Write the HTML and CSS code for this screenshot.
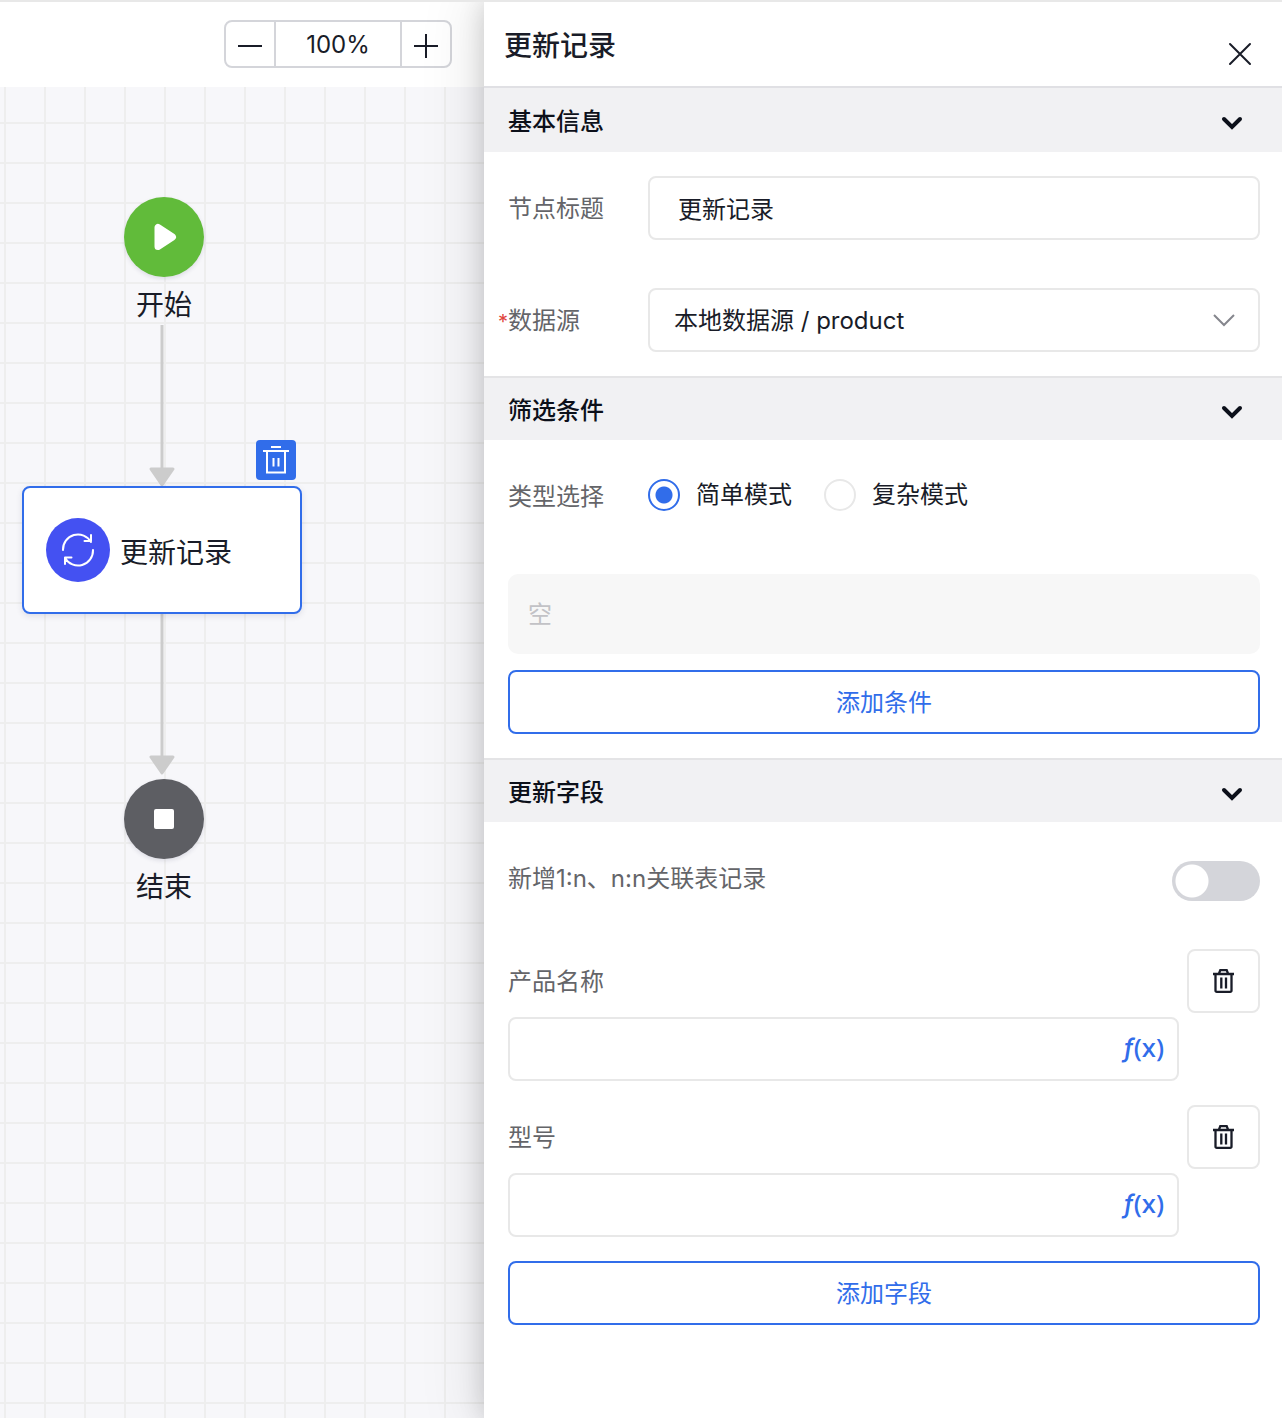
FILE: index.html
```html
<!DOCTYPE html>
<html lang="zh-CN">
<head>
<meta charset="utf-8">
<meta name="viewport" content="width=device-width, initial-scale=1">
<title>更新记录</title>
<link rel="stylesheet" href="styles.css">
</head>
<body>
<div class="shell">
  <main class="workspace">
    <div class="toolbar">
      <div class="zoom">
        <button class="zoom-btn" type="button" aria-label="缩小">
          <svg width="24" height="24" viewBox="0 0 24 24"><path d="M0 13h24" stroke="currentColor" stroke-width="2"/></svg>
        </button>
        <output class="zoom-value">100%</output>
        <button class="zoom-btn" type="button" aria-label="放大">
          <svg width="24" height="24" viewBox="0 0 24 24"><path d="M0 13h24M12 1v24" stroke="currentColor" stroke-width="2"/></svg>
        </button>
      </div>
    </div>
    <div class="canvas">
      <svg class="edge edge-start" width="28" height="162" viewBox="0 0 28 162">
        <path d="M14 0v144" stroke="#ccc" stroke-width="3"/>
        <path d="M3 144h22l-11 16z" fill="#ccc" stroke="#ccc" stroke-width="3" stroke-linejoin="round"/>
      </svg>
      <svg class="edge edge-end" width="28" height="162" viewBox="0 0 28 162">
        <path d="M14 0v144" stroke="#ccc" stroke-width="3"/>
        <path d="M3 144h22l-11 16z" fill="#ccc" stroke="#ccc" stroke-width="3" stroke-linejoin="round"/>
      </svg>
      <div class="node node-start">
        <span class="disc disc-green">
          <svg width="80" height="80" viewBox="0 0 80 80"><path d="M34 30.500v19L48.500 40z" fill="#fff" stroke="#fff" stroke-width="7" stroke-linejoin="round"/></svg>
        </span>
        <span class="node-name">开始</span>
      </div>
      <div class="card">
        <span class="card-icon">
          <svg width="64" height="64" viewBox="0 0 64 64" fill="none" stroke="#fff" stroke-width="2" stroke-linecap="round" stroke-linejoin="round">
            <path d="M17 32a15 15 0 0 1 28-8M45 17v6h-6.500"/>
            <path d="M47 32a15 15 0 0 1-28 8M19 46v-6.500h6.500"/>
          </svg>
        </span>
        <span class="node-name">更新记录</span>
      </div>
      <button class="card-delete" type="button" aria-label="删除节点">
        <svg width="40" height="40" viewBox="0 0 40 40" fill="none" stroke="#fff" stroke-width="2">
          <path d="M15 7h10M7 11h26M11 11v21.500h18V11M17.500 18v8.500M22.500 18v8.500"/>
        </svg>
      </button>
      <div class="node node-end">
        <span class="disc disc-gray">
          <svg width="80" height="80" viewBox="0 0 80 80"><rect x="30" y="30" width="20" height="20" rx="2" fill="#fff"/></svg>
        </span>
        <span class="node-name">结束</span>
      </div>
    </div>
  </main>

  <aside class="panel">
    <header class="panel-head">
      <h1 class="panel-title">更新记录</h1>
      <button class="icon-btn" type="button" aria-label="关闭">
        <svg width="24" height="24" viewBox="0 0 24 24"><path d="M2 2l20 20M22 2L2 22" stroke="currentColor" stroke-width="2" stroke-linecap="round"/></svg>
      </button>
    </header>

    <section class="section">
      <h2 class="section-head">
        <button class="section-toggle" type="button" aria-expanded="true">基本信息
          <svg width="24" height="24" viewBox="0 0 24 24"><path d="M4 9l8 8 8-8" fill="none" stroke="currentColor" stroke-width="4" stroke-linecap="round"/></svg>
        </button>
      </h2>
      <div class="section-body basic">
        <div class="row">
          <label class="label" for="node-title">节点标题</label>
          <input class="control text-input" id="node-title" type="text" value="更新记录">
        </div>
        <div class="row">
          <label class="label" for="source"><span class="required">*</span>数据源</label>
          <div class="select-wrap">
            <select class="control select" id="source"><option>本地数据源 / product</option></select>
            <svg class="caret" width="24" height="24" viewBox="0 0 24 24"><path d="M2 7l10 10L22 7" fill="none" stroke="currentColor" stroke-width="2"/></svg>
          </div>
        </div>
      </div>
    </section>

    <section class="section">
      <h2 class="section-head">
        <button class="section-toggle" type="button" aria-expanded="true">筛选条件
          <svg width="24" height="24" viewBox="0 0 24 24"><path d="M4 9l8 8 8-8" fill="none" stroke="currentColor" stroke-width="4" stroke-linecap="round"/></svg>
        </button>
      </h2>
      <div class="section-body filter">
        <div class="row mode-row" role="radiogroup" aria-labelledby="mode-label">
          <span class="label" id="mode-label">类型选择</span>
          <div class="radios">
            <label class="radio-label"><input class="radio" type="radio" name="mode" checked>简单模式</label>
            <label class="radio-label"><input class="radio" type="radio" name="mode">复杂模式</label>
          </div>
        </div>
        <div class="empty">空</div>
        <button class="add-btn" type="button">添加条件</button>
      </div>
    </section>

    <section class="section">
      <h2 class="section-head">
        <button class="section-toggle" type="button" aria-expanded="true">更新字段
          <svg width="24" height="24" viewBox="0 0 24 24"><path d="M4 9l8 8 8-8" fill="none" stroke="currentColor" stroke-width="4" stroke-linecap="round"/></svg>
        </button>
      </h2>
      <div class="section-body fields">
        <div class="switch-row">
          <label class="switch-label" for="relation">新增1:n、n:n关联表记录</label>
          <input class="switch" id="relation" type="checkbox" role="switch">
        </div>
        <div class="field">
          <div class="field-head">
            <label class="label" for="field-name">产品名称</label>
            <button class="delete-btn" type="button" aria-label="删除产品名称">
              <svg width="23" height="26" viewBox="0 0 23 26" fill="none" stroke="currentColor" stroke-width="2.300"><path d="M1 6h21M7 5.500l1.300-3.300h6.400L16 5.500"/><path d="M3.500 6v16.500a1.300 1.300 0 0 0 1.300 1.400h13.400a1.300 1.300 0 0 0 1.300-1.400V6M9.300 9.500v11M14 9.500v11"/></svg>
            </button>
          </div>
          <div class="formula">
            <input class="formula-input" id="field-name" type="text">
            <button class="fx" type="button" aria-label="公式"><i class="fx-f">ƒ</i>(x)</button>
          </div>
        </div>
        <div class="field">
          <div class="field-head">
            <label class="label" for="field-model">型号</label>
            <button class="delete-btn" type="button" aria-label="删除型号">
              <svg width="23" height="26" viewBox="0 0 23 26" fill="none" stroke="currentColor" stroke-width="2.300"><path d="M1 6h21M7 5.500l1.300-3.300h6.400L16 5.500"/><path d="M3.500 6v16.500a1.300 1.300 0 0 0 1.300 1.400h13.400a1.300 1.300 0 0 0 1.300-1.400V6M9.300 9.500v11M14 9.500v11"/></svg>
            </button>
          </div>
          <div class="formula">
            <input class="formula-input" id="field-model" type="text">
            <button class="fx" type="button" aria-label="公式"><i class="fx-f">ƒ</i>(x)</button>
          </div>
        </div>
        <button class="add-btn" type="button">添加字段</button>
      </div>
    </section>
  </aside>
</div>
</body>
</html>
```
FILE: styles.css
```css
* { box-sizing: border-box; }

:root {
  --ink: #191c28;
  --muted: #646569;
  --line: #e8e8e8;
  --primary: #316dea;
}

body {
  margin: 0;
  color: var(--ink);
  background: #fff;
  font: 400 24px/36px Inter, "Noto Sans CJK SC", sans-serif;
}

button, input, select { font: inherit; color: inherit; }

button {
  padding: 0;
  border: 0;
  background: none;
  cursor: pointer;
}

svg { display: block; overflow: visible; }

.shell {
  display: grid;
  grid-template-columns: 484fr 798fr;
  min-height: 100vh;
  border-top: 2px solid var(--line);
  overflow: clip;
}

/* Canvas side */
.workspace { display: flex; flex-direction: column; min-width: 0; }

.toolbar {
  display: flex;
  justify-content: flex-end;
  padding: 18px 32px 19px;
}

.zoom {
  display: flex;
  height: 48px;
  border: 2px solid #d4d5da;
  border-radius: 8px;
}

.zoom-btn { display: grid; place-items: center; width: 48px; padding-top: 2px; }

.zoom-value {
  width: 128px;
  border: solid #d4d5da;
  border-width: 0 2px;
  padding-top: 5px;
  text-align: center;
}

.canvas {
  position: relative;
  flex: 1;
  background:
    linear-gradient(90deg, #eee 2px, transparent 2px) 4px 35px / 40px 40px,
    linear-gradient(#eee 2px, transparent 2px) 4px 35px / 40px 40px,
    #f7f7fa;
}

.node, .card, .card-delete, .edge { position: absolute; }

.node {
  left: 124px;
  display: flex;
  flex-direction: column;
  align-items: center;
  gap: 8px;
  width: 80px;
}

.node-start { top: 110px; }
.node-end { top: 692px; }
.node-name { font-size: 28px; line-height: 40px; white-space: nowrap; }

.disc {
  width: 80px;
  height: 80px;
  border-radius: 50%;
  box-shadow: 0 2px 4px rgba(40, 40, 80, .12);
}

.disc-green { background: #61bb3a; }
.disc-gray { background: #5d5e63; }

.edge { left: 148px; }
.edge-start { top: 238px; }
.edge-end { top: 526px; }

.card {
  top: 399px;
  left: 22px;
  display: flex;
  align-items: center;
  gap: 10px;
  width: 280px;
  height: 128px;
  padding: 0 22px;
  border: 2px solid var(--primary);
  border-radius: 8px;
  background: #fff;
  box-shadow: 0 2px 6px rgba(40, 40, 80, .12);
}

.card .node-name { padding-top: 5px; }
.card-icon { border-radius: 50%; background: #4451f2; }

.card-delete {
  top: 353px;
  left: 256px;
  border-radius: 4px;
  background: var(--primary);
}

/* Settings panel */
.panel {
  position: relative;
  min-width: 0;
  background: #fff;
  box-shadow: 0 0 24px rgba(0, 0, 0, .16), 0 0 56px 8px rgba(0, 0, 0, .1);
}

.panel-head {
  display: flex;
  justify-content: space-between;
  height: 86px;
  padding: 24px 30px 0 20px;
  border-bottom: 2px solid #e0e0e4;
}

.panel-title { margin: 0; font-size: 28px; font-weight: 500; line-height: 40px; }
.icon-btn { align-self: flex-start; margin-top: 16px; }

.section-head {
  height: 64px;
  margin: 0;
  background: #f1f1f3;
  font-size: 24px;
  font-weight: 500;
}

.section + .section .section-head { border-top: 2px solid #e4e4e6; }

.section-toggle {
  display: flex;
  align-items: center;
  justify-content: space-between;
  width: 100%;
  height: 100%;
  padding: 3px 38px 0 24px;
  color: #0c101a;
}

.section-body { display: flex; flex-direction: column; padding: 24px 22px 24px 24px; }
.basic { gap: 48px; }

.row { display: flex; align-items: center; }
.row .label { flex: 0 0 140px; }
.label, .switch-label { color: var(--muted); }
.label { padding-top: 2px; }

.required {
  margin-left: -10px;
  color: #e0443e;
  font-size: 20px;
}

.control {
  width: 100%;
  height: 64px;
  border: 2px solid var(--line);
  border-radius: 8px;
  background: #fff;
}

.text-input { padding: 0 28px 2px; }
.select-wrap { display: grid; flex: 1; align-items: center; }
.select-wrap > * { grid-area: 1 / 1; }
.select { padding: 2px 60px 0 24px; appearance: none; }
.caret { justify-self: end; margin-right: 24px; color: #85868d; pointer-events: none; }

.mode-row { height: 64px; margin-bottom: 46px; }
.radios { display: flex; gap: 32px; padding-bottom: 2px; }
.radio-label { display: flex; align-items: center; gap: 16px; height: 34px; }

.radio {
  width: 32px;
  height: 32px;
  margin: 0;
  border: 2px solid var(--line);
  border-radius: 50%;
  appearance: none;
}

.radio:checked {
  border-color: var(--primary);
  background: radial-gradient(circle, var(--primary) 8px, transparent 9px);
}

.empty {
  margin-bottom: 16px;
  padding: 23px 20px 21px;
  border-radius: 10px;
  background: #f7f7f7;
  color: #c2c2c6;
}

.add-btn {
  height: 64px;
  padding-top: 2px;
  border: 2px solid var(--primary);
  border-radius: 8px;
  color: var(--primary);
}

.fields { gap: 24px; padding-top: 39px; }

.switch-row {
  display: flex;
  justify-content: space-between;
  height: 40px;
  margin-bottom: 24px;
}

.switch {
  width: 88px;
  height: 40px;
  margin: 0;
  border-radius: 20px;
  background: radial-gradient(circle at 20px 20px, #fff 16px, transparent 17px) #d4d5da;
  appearance: none;
}

.field { display: flex; flex-direction: column; gap: 4px; }
.field-head { display: flex; align-items: center; justify-content: space-between; }

.delete-btn {
  display: grid;
  place-items: center;
  width: 73px;
  height: 64px;
  border: 2px solid var(--line);
  border-radius: 8px;
}

.formula {
  display: flex;
  height: 64px;
  margin-right: 81px;
  padding-right: 13px;
  border: 2px solid var(--line);
  border-radius: 8px;
}

.formula-input {
  flex: 1;
  min-width: 0;
  padding: 0 24px;
  border: 0;
  background: none;
}

.fx {
  padding-bottom: 3px;
  color: var(--primary);
  font-family: "Noto Sans", sans-serif;
  font-size: 26px;
  font-weight: 500;
}

.fx-f { font-family: Inter, sans-serif; }
```
